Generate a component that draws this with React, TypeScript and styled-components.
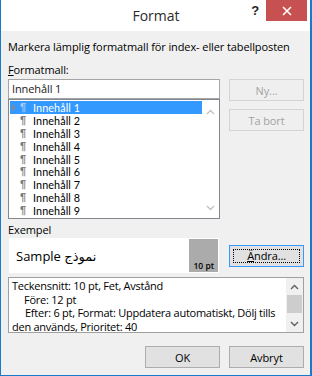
import React from 'react'
import styled, { createGlobalStyle } from 'styled-components'

const UI_FONT = '"Open Sans", "Noto Sans", "DejaVu Sans", sans-serif'

const GlobalStyle = createGlobalStyle`
  html, body {
    margin: 0;
    padding: 0;
    background: #ffffff;
  }
  * {
    box-sizing: border-box;
  }
`

const items = [
  'Innehåll 1',
  'Innehåll 2',
  'Innehåll 3',
  'Innehåll 4',
  'Innehåll 5',
  'Innehåll 6',
  'Innehåll 7',
  'Innehåll 8',
  'Innehåll 9',
]

const ChevronUp = ({ color }: { color: string }) => (
  <svg width="9" height="6" viewBox="0 0 9 6">
    <polyline points="1,5 4.5,1.5 8,5" fill="none" stroke={color} strokeWidth="1.4" />
  </svg>
)

const ChevronDown = ({ color }: { color: string }) => (
  <svg width="9" height="6" viewBox="0 0 9 6">
    <polyline points="1,1 4.5,4.5 8,1" fill="none" stroke={color} strokeWidth="1.4" />
  </svg>
)

function App() {
  return (
    <>
      <GlobalStyle />
      <ScWindow>
        <ScTitleBar>
          <span />
          <ScTitle>Format</ScTitle>
          <ScTitleTools>
            <ScHelp>?</ScHelp>
            <ScClose>
              <svg width="10" height="10" viewBox="0 0 10 10">
                <path d="M1 1 L9 9 M9 1 L1 9" stroke="#ffffff" strokeWidth="1.6" />
              </svg>
            </ScClose>
          </ScTitleTools>
        </ScTitleBar>

        <ScBody>
          <ScPrompt>Markera lämplig formatmall för index- eller tabellposten</ScPrompt>
          <ScLabel $top={8}>
            <u>F</u>ormatmall:
          </ScLabel>

          <ScRow>
            <ScLeftCol>
              <ScInput>Innehåll 1</ScInput>
              <ScList>
                <ScItems>
                  {items.map((item, i) => (
                    <ScItem key={item} $selected={i === 0}>
                      <ScMarker>
                        {i === 0 && (
                          <svg width="4" height="7" viewBox="0 0 4 7">
                            <polygon points="0,0 4,3.5 0,7" fill="#7d8a99" />
                          </svg>
                        )}
                      </ScMarker>
                      <ScPilcrow $selected={i === 0}>¶</ScPilcrow>
                      <ScItemText>{item}</ScItemText>
                    </ScItem>
                  ))}
                </ScItems>
                <ScListScroll>
                  <ChevronUp color="#c2c2c2" />
                  <ChevronDown color="#c2c2c2" />
                </ScListScroll>
              </ScList>
            </ScLeftCol>
            <ScSideButtons>
              <ScButton disabled>Ny...</ScButton>
              <ScButton disabled>Ta bort</ScButton>
            </ScSideButtons>
          </ScRow>

          <ScLabel $top={3}>Exempel</ScLabel>
          <ScSampleRow>
            <ScSampleBox>
              <ScSampleText>Sample نموذج</ScSampleText>
              <ScSize>10 pt</ScSize>
            </ScSampleBox>
            <ScButton $focused>
              <ScFocusRing>
                <u>Ä</u>ndra...
              </ScFocusRing>
            </ScButton>
          </ScSampleRow>

          <ScDescription>
            <ScDescText>
              <div>Teckensnitt: 10 pt, Fet, Avstånd</div>
              <ScIndent $pad={12}>Före: 12 pt</ScIndent>
              <ScIndent $pad={13}>Efter: 6 pt, Format: Uppdatera automatiskt, Dölj tills</ScIndent>
              <div>den används, Prioritet: 40</div>
            </ScDescText>
            <ScDescScroll>
              <ScArrowCell>
                <ChevronUp color="#606060" />
              </ScArrowCell>
              <ScThumb />
              <ScTrack />
              <ScArrowCell>
                <ChevronDown color="#606060" />
              </ScArrowCell>
            </ScDescScroll>
          </ScDescription>

          <ScFooter>
            <ScButton>OK</ScButton>
            <ScButton>Avbryt</ScButton>
          </ScFooter>
        </ScBody>
      </ScWindow>
    </>
  )
}

const ScWindow = styled.div`
  width: 312px;
  height: 376px;
  display: flex;
  flex-direction: column;
  background: #f0f0f0;
  border-left: 1px solid #1979ca;
  border-right: 2px solid #1979ca;
  border-bottom: 1px solid #1979ca;
  font-family: ${UI_FONT};
  font-size: 11px;
  letter-spacing: -0.1px;
  color: #000000;
`

const ScTitleBar = styled.div`
  height: 31px;
  flex: none;
  background: #ffffff;
  display: grid;
  grid-template-columns: 1fr auto 1fr;
  align-items: start;
`

const ScTitle = styled.div`
  font-size: 14px;
  line-height: 31px;
  letter-spacing: 0;
  color: #2b2b2b;
  padding-left: 1px;
`

const ScTitleTools = styled.div`
  display: flex;
  justify-content: flex-end;
  align-items: flex-start;
  padding-right: 3px;
`

const ScHelp = styled.div`
  font-family: "Liberation Sans", Arial, sans-serif;
  font-weight: bold;
  font-size: 13px;
  line-height: 22px;
  margin-right: 7px;
  color: #1e1e1e;
`

const ScClose = styled.div`
  width: 41px;
  height: 21px;
  background: #c75050;
  display: flex;
  align-items: center;
  justify-content: center;
`

const ScBody = styled.div`
  flex: 1;
  display: flex;
  flex-direction: column;
  padding: 8px 6px 0 7px;
`

const ScPrompt = styled.div`
  line-height: 15px;
`

const ScLabel = styled.div<{ $top: number }>`
  line-height: 15px;
  margin-top: ${p => p.$top}px;
`

const ScRow = styled.div`
  display: flex;
  gap: 9px;
  margin-top: 2px;
`

const ScLeftCol = styled.div`
  width: 212px;
  display: flex;
  flex-direction: column;
`

const ScInput = styled.div`
  height: 20px;
  background: #ffffff;
  border: 1px solid #a5a5a5;
  padding-left: 3px;
  line-height: 18px;
  color: #1a1a1a;
`

const ScList = styled.div`
  height: 120px;
  background: #ffffff;
  border: 1px solid #828790;
  display: flex;
  padding: 1px 0 1px 1px;
`

const ScItems = styled.div`
  flex: 1;
  display: flex;
  flex-direction: column;
`

const ScItem = styled.div<{ $selected: boolean }>`
  height: 13px;
  display: flex;
  align-items: center;
  overflow: hidden;
  background: ${p => (p.$selected ? '#3399ff' : 'transparent')};
  color: ${p => (p.$selected ? '#ffffff' : '#000000')};
`

const ScMarker = styled.span`
  width: 10px;
  padding-left: 2px;
  display: flex;
  align-items: center;
`

const ScPilcrow = styled.span<{ $selected: boolean }>`
  display: block;
  width: 13px;
  height: 13px;
  font-family: "Liberation Sans", Arial, sans-serif;
  font-weight: bold;
  font-size: 11px;
  line-height: 13px;
  color: ${p => (p.$selected ? '#a9cdf2' : '#7a7a7a')};
`

const ScItemText = styled.span`
  display: block;
  height: 13px;
  font-family: Lato, "Open Sans", sans-serif;
  font-size: 10.8px;
  letter-spacing: 0.1px;
  line-height: 13px;
`

const ScListScroll = styled.div`
  width: 17px;
  background: #ffffff;
  display: flex;
  flex-direction: column;
  justify-content: space-between;
  align-items: center;
  padding: 8px 0 6px;
`

const ScSideButtons = styled.div`
  display: flex;
  flex-direction: column;
  gap: 8px;
`

const ScButton = styled.button<{ $focused?: boolean }>`
  width: 75px;
  height: 22px;
  padding: 0;
  font-family: ${UI_FONT};
  font-size: 11px;
  letter-spacing: -0.1px;
  color: #000000;
  background: #e1e1e1;
  border: 1px solid ${p => (p.$focused ? '#3399ff' : '#adadad')};
  display: flex;
  align-items: center;
  justify-content: center;

  &:disabled {
    background: #efefef;
    border-color: #d4d4d4;
    color: #a3a3a3;
  }
`

const ScFocusRing = styled.span`
  width: 67px;
  height: 14px;
  line-height: 12px;
  border: 1px dotted #000000;
  text-align: center;
`

const ScSampleRow = styled.div`
  display: flex;
  align-items: center;
  gap: 10px;
  margin-top: 1px;
`

const ScSampleBox = styled.div`
  width: 211px;
  height: 35px;
  margin-left: 1px;
  background: #ffffff;
  border: 1px solid #ffffff;
  display: flex;
`

const ScSampleText = styled.div`
  flex: 1;
  font-family: "Open Sans", "DejaVu Sans", sans-serif;
  font-size: 13px;
  line-height: 35px;
  letter-spacing: 0;
  padding-left: 6px;
`

const ScSize = styled.div`
  width: 29px;
  background: #ababab;
  font-size: 8.5px;
  font-weight: 600;
  letter-spacing: 0;
  display: flex;
  align-items: flex-end;
  justify-content: center;
  padding-bottom: 1px;
`

const ScDescription = styled.div`
  width: 296px;
  height: 56px;
  margin-top: 4px;
  background: #ffffff;
  border: 1px solid #a0a0a0;
  display: flex;
`

const ScDescText = styled.div`
  flex: 1;
  line-height: 13.5px;
  letter-spacing: -0.25px;
  padding: 1px 0 0 3px;
  white-space: nowrap;
  overflow: hidden;
`

const ScIndent = styled.div<{ $pad: number }>`
  padding-left: ${p => p.$pad}px;
`

const ScDescScroll = styled.div`
  width: 17px;
  background: #f0f0f0;
  display: flex;
  flex-direction: column;
`

const ScArrowCell = styled.div`
  height: 17px;
  display: flex;
  align-items: center;
  justify-content: center;
`

const ScThumb = styled.div`
  height: 18px;
  margin: 0 1px;
  background: #cdcdcd;
`

const ScTrack = styled.div`
  flex: 1;
`

const ScFooter = styled.div`
  display: flex;
  justify-content: flex-end;
  gap: 9px;
  margin-top: 13px;
`

export default App
